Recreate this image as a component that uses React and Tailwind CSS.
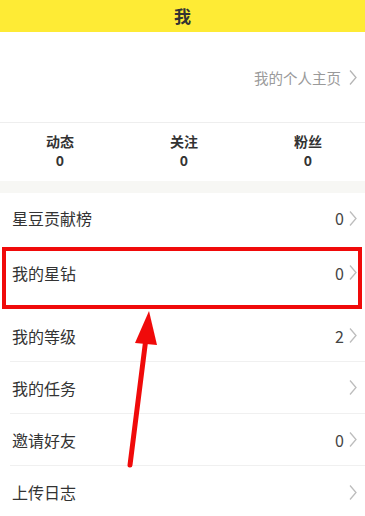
import React from 'react';

function Chevron({ className = '' }) {
  return (
    <svg viewBox="0 0 8 16" className={className} fill="none" stroke="currentColor" strokeWidth="1.3">
      <path d="M1 1 L7 8 L1 15" />
    </svg>
  );
}

const stats = [
  { label: '动态', value: '0' },
  { label: '关注', value: '0' },
  { label: '粉丝', value: '0' },
];

export default function App() {
  const font = { fontFamily: '"Noto Sans CJK SC", "Noto Sans", sans-serif' };

  return (
    <div className="relative w-[365px] h-[516px] overflow-hidden bg-white text-[#333]" style={font}>
      <header className="h-[32px] bg-[#feeb35] flex items-center justify-center text-[17px] font-bold text-[#333]">
        我
      </header>

      <div className="h-[91px] flex items-center justify-end pr-[8px] pt-[1px] border-b border-[#eeeeee]">
        <span className="text-[14.5px] text-[#9a9a9a]">我的个人主页</span>
        <Chevron className="w-[8px] h-[17px] ml-[8px] text-[#b5b5b5]" />
      </div>

      <div className="h-[58px] -ml-[2px] grid grid-cols-[124px_124px_124px]">
        {stats.map((s) => (
          <div key={s.label} className="flex flex-col items-center justify-center leading-[19px] pb-[2px]">
            <span className="text-[14px] font-bold text-[#333]">{s.label}</span>
            <span className="text-[14px] font-bold text-[#333]">{s.value}</span>
          </div>
        ))}
      </div>

      <div className="h-[12px] bg-[#f7f7f4]" />

      <div className="h-[54px] flex items-center pl-[12px] pr-[8px] pb-[4px]">
        <span className="flex-1 text-[16px]">星豆贡献榜</span>
        <span className="text-[16px] text-[#444] mr-[5px]">0</span>
        <Chevron className="w-[8px] h-[17px] text-[#bdbdbd]" />
      </div>
      <div className="h-[63px] flex items-center pl-[12px] pr-[8px] pb-[12px]">
        <span className="flex-1 text-[16px]">我的星钻</span>
        <span className="text-[16px] text-[#444] mr-[5px]">0</span>
        <Chevron className="w-[8px] h-[17px] text-[#bdbdbd]" />
      </div>

      <div className="ml-[10px]">
        {[
          { label: '我的等级', value: '2' },
          { label: '我的任务', value: '' },
          { label: '邀请好友', value: '0' },
          { label: '上传日志', value: '' },
        ].map((r, i) => (
          <div
            key={r.label}
            className={`h-[52px] flex items-center pl-[2px] pr-[8px] ${i < 3 ? 'border-b border-[#f0f0f0]' : ''}`}
          >
            <span className="flex-1 text-[16px]">{r.label}</span>
            {r.value && <span className="text-[16px] text-[#444] mr-[5px]">{r.value}</span>}
            <Chevron className="w-[8px] h-[17px] text-[#bdbdbd]" />
          </div>
        ))}
      </div>

      {/* annotation overlay */}
      <div className="absolute left-[2px] top-[247px] w-[360px] h-[62px] border-[4px] border-[#f00a0a]" />
      <svg className="absolute left-0 top-0 pointer-events-none" width="365" height="516">
        <line x1="130" y1="465" x2="146" y2="338" stroke="#f00a0a" strokeWidth="5" strokeLinecap="round" />
        <polygon points="149,311 135,343 157,345" fill="#f00a0a" />
      </svg>
    </div>
  );
}
